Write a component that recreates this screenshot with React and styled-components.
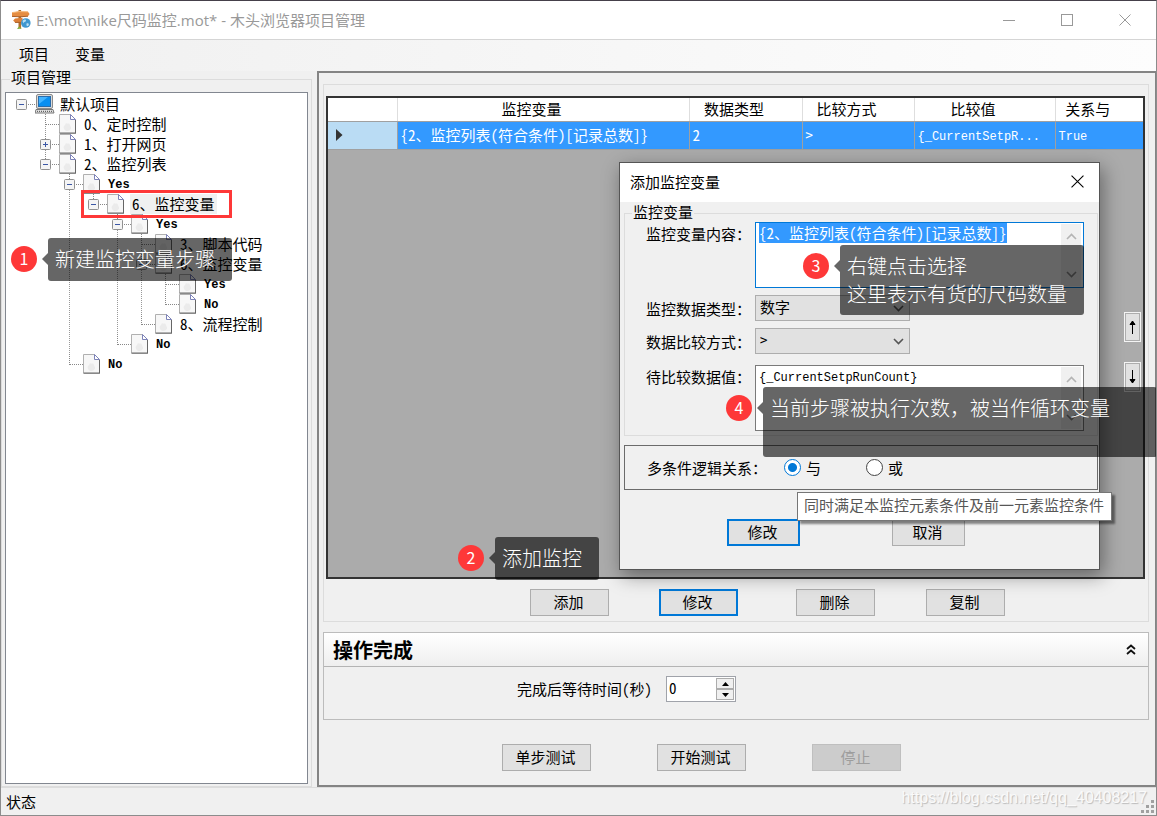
import React, { useEffect, useRef, useState } from "react";
import styled, { createGlobalStyle, css } from "styled-components";

const treeData = {
  label: "默认项目",
  open: true,
  children: [
    { label: "0、定时控制" },
    { label: "1、打开网页", open: false, children: [] },
    {
      label: "2、监控列表",
      open: true,
      children: [
        {
          label: "Yes",
          open: true,
          children: [
            {
              label: "6、监控变量",
              open: true,
              selected: true,
              children: [
                {
                  label: "Yes",
                  open: true,
                  children: [
                    { label: "3、脚本代码" },
                    {
                      label: "6、监控变量",
                      open: true,
                      children: [{ label: "Yes" }, { label: "No" }],
                    },
                    { label: "8、流程控制" },
                  ],
                },
                { label: "No" },
              ],
            },
          ],
        },
        { label: "No" },
      ],
    },
  ],
};

const columns = [
  { title: "监控变量" },
  { title: "数据类型", width: 113 },
  { title: "比较方式", width: 112 },
  { title: "比较值", width: 141 },
  { title: "关系与", width: 88 },
];

const rows = [
  ["{2、监控列表(符合条件)[记录总数]}", "2", ">", "{_CurrentSetpR...", "True"],
];

function SignpostIcon() {
  return (
    <svg width="20" height="20" viewBox="0 0 20 20">
      <path d="M7.5 0h2.6v19l-1.4-1-1.2 1z" fill="#b0702c" />
      <path d="M1 2.6l7-1 9 .2L18.6 4 17 6.2 9 6.8 1 6.4z" fill="#e58d42" />
      <path d="M1 2.6l7-1 9 .2" stroke="#f6b877" fill="none" />
      <path d="M1 6.4l8 .4 8-.6" stroke="#a9602a" fill="none" />
      <path d="M4 8.6l7.5-.8v4.6L4 12.4 2.2 10.4z" fill="#dd8038" />
      <path d="M4 12.4h6" stroke="#a9602a" />
      <path d="M6 19l2-2.6 2.6 2.2z" fill="#7fae35" />
      <circle cx="14.8" cy="13" r="4.8" fill="#3f97cf" />
      <path
        d="M11.5 11c2-2.5 4-1.5 3.4 0-.6 1.3-2.4.6-2.4 2.4zM15.5 13.5c2-.8 3 .3 2 2-1 1.2-2.4.6-2-2z"
        fill="#b9dff2"
      />
    </svg>
  );
}

function ComputerIcon() {
  return (
    <svg width="20" height="20" viewBox="0 0 20 20">
      <rect x="1.5" y=".5" width="16" height="14" rx="1.5" fill="#d9d9d9" stroke="#8b8b8b" />
      <rect x="3.5" y="2.5" width="12" height="10" fill="#0a8ff0" stroke="#2a6cab" />
      <path d="M4 3h9L4 10z" fill="#43b4ff" />
      <path d="M1 15.5h17l1 3.5H0z" fill="#e4e4e4" stroke="#777" />
      <path d="M2 17.3h15" stroke="#444" strokeDasharray="1 1" />
    </svg>
  );
}

function PageIcon() {
  return (
    <svg width="18" height="20" viewBox="0 0 18 20">
      <path d="M.5.5h11l5 5v13.5H.5z" fill="#f7f7f7" stroke="#b0b0b0" />
      <path d="M.5 19.2h16.5M16.5 6v13" stroke="#666" fill="none" />
      <path d="M11.5 .5v5h5z" fill="#fff" stroke="#7d83b8" />
      <path d="M5 15c-1-4 1-3 2-6 2 2 3-1 4 2s2 3 0 5-5 1-6-1z" fill="#ebebeb" />
    </svg>
  );
}

function CrossIcon({ size = 12 }) {
  return (
    <svg width={size} height={size} viewBox="0 0 12 12">
      <path d="M.5.5l11 11M11.5.5l-11 11" stroke="currentColor" fill="none" />
    </svg>
  );
}

function ArrowIcon({ down }) {
  return (
    <svg width="9" height="14" viewBox="0 0 9 14">
      <path
        d={down ? "M4.5 0v13M2 9.5l2.5 3.5L7 9.5z" : "M4.5 14V1M2 4.5L4.5 1 7 4.5z"}
        stroke="#000"
        fill="#000"
      />
    </svg>
  );
}

function Chevron({ up, color = "#555" }) {
  return (
    <svg width="11" height="7" viewBox="0 0 11 7">
      <path
        d={up ? "M1 6l4.5-4.5L10 6" : "M1 1l4.5 4.5L10 1"}
        stroke={color}
        strokeWidth="1.6"
        fill="none"
      />
    </svg>
  );
}

function TreeNode({ node, root, last }) {
  const [open, setOpen] = useState(node.open);
  const latin = /^[A-Za-z]+$/.test(node.label);

  return (
    <TreeItem $line={!last}>
      <TreeRow>
        <Branch $root={root}>
          {node.children && (
            <Expander
              type="button"
              aria-label={node.label}
              onClick={() => setOpen(!open)}
            >
              <svg width="11" height="11" viewBox="0 0 11 11">
                <rect x=".5" y=".5" width="10" height="10" rx="1" fill="#f4f4f4" stroke="#919191" />
                <path d={open ? "M3 5.5h5" : "M3 5.5h5M5.5 3v5"} stroke="#3b57a5" />
              </svg>
            </Expander>
          )}
        </Branch>
        <NodeIcon>{root ? <ComputerIcon /> : <PageIcon />}</NodeIcon>
        <NodeLabel $selected={node.selected} $latin={latin}>
          {node.label}
        </NodeLabel>
      </TreeRow>
      {open && node.children && node.children.length > 0 && (
        <TreeList $nested>
          {node.children.map((child, i) => (
            <TreeNode
              key={i}
              node={child}
              last={i === node.children.length - 1}
            />
          ))}
        </TreeList>
      )}
    </TreeItem>
  );
}

function ScrollStrip() {
  return (
    <Strip>
      <Chevron up color="#b4b4b4" />
      <Chevron color="#8a8a8a" />
    </Strip>
  );
}

function MonitorDialog() {
  const contentRef = useRef();
  const [relation, setRelation] = useState("and");

  useEffect(() => {
    contentRef.current.focus();
    contentRef.current.select();
  }, []);

  return (
    <Dialog role="dialog" aria-label="添加监控变量">
      <DialogTitle>
        添加监控变量
        <CloseButton type="button" aria-label="关闭">
          <CrossIcon size={13} />
        </CloseButton>
      </DialogTitle>
      <DialogBody>
        <FormGroup>
          <legend>监控变量</legend>
          <FieldRow $tall>
            <label htmlFor="content">监控变量内容：</label>
            <AreaBox $active>
              <Area
                id="content"
                ref={contentRef}
                spellCheck={false}
                defaultValue="{2、监控列表(符合条件)[记录总数]}"
              />
              <ScrollStrip />
            </AreaBox>
          </FieldRow>
          <FieldRow>
            <label htmlFor="type">监控数据类型：</label>
            <SelectBox>
              <select id="type" defaultValue="数字">
                <option>数字</option>
              </select>
              <Chevron />
            </SelectBox>
          </FieldRow>
          <FieldRow>
            <label htmlFor="compare">数据比较方式：</label>
            <SelectBox>
              <select id="compare" defaultValue=">">
                <option>&gt;</option>
              </select>
              <Chevron />
            </SelectBox>
          </FieldRow>
          <FieldRow $tall>
            <label htmlFor="value">待比较数据值：</label>
            <AreaBox>
              <Area
                id="value"
                $latin
                spellCheck={false}
                defaultValue="{_CurrentSetpRunCount}"
              />
              <ScrollStrip />
            </AreaBox>
          </FieldRow>
        </FormGroup>
        <RelationGroup role="radiogroup" aria-label="多条件逻辑关系">
          <span>多条件逻辑关系：</span>
          <RadioLabel>
            <input
              type="radio"
              name="relation"
              checked={relation === "and"}
              onChange={() => setRelation("and")}
            />
            与
          </RadioLabel>
          <RadioLabel>
            <input
              type="radio"
              name="relation"
              checked={relation === "or"}
              onChange={() => setRelation("or")}
            />
            或
          </RadioLabel>
        </RelationGroup>
        <DialogActions>
          <Button type="button" $width={73} $primary>
            修改
          </Button>
          <Button type="button" $width={73}>
            取消
          </Button>
        </DialogActions>
      </DialogBody>
      <Tooltip role="tooltip">同时满足本监控元素条件及前一元素监控条件</Tooltip>
    </Dialog>
  );
}

function Note({ number, left, top, width, height, children }) {
  return (
    <NoteWrap $left={left} $top={top}>
      <NoteNumber>{number}</NoteNumber>
      <NoteArrow />
      <NoteText $width={width} $height={height}>
        {children}
      </NoteText>
    </NoteWrap>
  );
}

export default function App() {
  return (
    <>
      <GlobalStyle />
      <Window>
        <TitleBar>
          <SignpostIcon />
          <h1>E:\mot\nike尺码监控.mot* - 木头浏览器项目管理</h1>
          <WindowButton type="button" aria-label="最小化">
            <svg width="12" height="12" viewBox="0 0 12 12">
              <path d="M0 6.5h12" stroke="currentColor" />
            </svg>
          </WindowButton>
          <WindowButton type="button" aria-label="最大化">
            <svg width="12" height="12" viewBox="0 0 12 12">
              <rect x=".5" y=".5" width="11" height="11" fill="none" stroke="currentColor" />
            </svg>
          </WindowButton>
          <WindowButton type="button" aria-label="关闭">
            <CrossIcon />
          </WindowButton>
        </TitleBar>
        <MenuBar>
          <button type="button">项目</button>
          <button type="button">变量</button>
        </MenuBar>
        <Main>
          <ProjectGroup>
            <legend>项目管理</legend>
            <Tree>
              <TreeList>
                <TreeNode node={treeData} root last />
              </TreeList>
            </Tree>
          </ProjectGroup>
          <Panel>
            <GridGroup>
              <GridBox>
                <Grid>
                  <colgroup>
                    <Col $width={69} />
                    {columns.map((c) => (
                      <Col key={c.title} $width={c.width} />
                    ))}
                  </colgroup>
                  <thead>
                    <tr>
                      <th aria-label="行" />
                      {columns.map((c) => (
                        <HeadCell key={c.title}>{c.title}</HeadCell>
                      ))}
                    </tr>
                  </thead>
                  <tbody>
                    {rows.map((row, i) => (
                      <tr key={i}>
                        <RowHead>
                          <svg width="7" height="12" viewBox="0 0 7 12">
                            <path d="M0 0l6.5 6L0 12z" fill="#333" />
                          </svg>
                        </RowHead>
                        {row.map((cell, j) => (
                          <Cell key={j} $latin={j > 2}>
                            {cell}
                          </Cell>
                        ))}
                      </tr>
                    ))}
                  </tbody>
                </Grid>
                <MoveButtons>
                  <MoveButton type="button" aria-label="上移">
                    <ArrowIcon />
                  </MoveButton>
                  <MoveButton type="button" aria-label="下移">
                    <ArrowIcon down />
                  </MoveButton>
                </MoveButtons>
              </GridBox>
              <GridActions>
                <Button type="button">添加</Button>
                <Button type="button" $primary>
                  修改
                </Button>
                <Button type="button">删除</Button>
                <Button type="button">复制</Button>
              </GridActions>
            </GridGroup>
            <DoneSection>
              <DoneHeader>
                <h2>操作完成</h2>
                <svg width="10" height="11" viewBox="0 0 10 11">
                  <path
                    d="M1 5l4-3.5L9 5M1 10l4-3.5L9 10"
                    stroke="#111"
                    strokeWidth="1.8"
                    fill="none"
                  />
                </svg>
              </DoneHeader>
              <DoneBody>
                <label htmlFor="wait">完成后等待时间(秒)</label>
                <Spinner>
                  <input id="wait" type="text" defaultValue="0" />
                  <SpinButtons>
                    <button type="button" aria-label="增加">
                      <svg width="7" height="4" viewBox="0 0 7 4">
                        <path d="M0 4l3.5-4L7 4z" />
                      </svg>
                    </button>
                    <button type="button" aria-label="减少">
                      <svg width="7" height="4" viewBox="0 0 7 4">
                        <path d="M0 0l3.5 4L7 0z" />
                      </svg>
                    </button>
                  </SpinButtons>
                </Spinner>
              </DoneBody>
            </DoneSection>
            <TestActions>
              <Button type="button" $width={89}>
                单步测试
              </Button>
              <Button type="button" $width={89}>
                开始测试
              </Button>
              <Button type="button" $width={89} disabled>
                停止
              </Button>
            </TestActions>
          </Panel>
        </Main>
        <StatusBar>
          <span>状态</span>
          <Watermark>https://blog.csdn.net/qq_40408217</Watermark>
          <Grip width="13" height="13" viewBox="0 0 13 13" fill="#a0a0a0">
            <path d="M10 0h3v3h-3zM5 5h3v3H5zM10 5h3v3h-3zM0 10h3v3H0zM5 10h3v3H5zM10 10h3v3h-3z" />
          </Grip>
        </StatusBar>

        <MonitorDialog />
        <RedFrame />
        <Note number="1" left={11} top={238} width={184} height={43}>
          新建监控变量步骤
        </Note>
        <Note number="2" left={458} top={537} width={104} height={43}>
          添加监控
        </Note>
        <Note number="3" left={803} top={245} width={244} height={70}>
          右键点击选择
          <br />
          这里表示有货的尺码数量
        </Note>
        <Note number="4" left={726} top={387} width={394} height={70}>
          当前步骤被执行次数，被当作循环变量
        </Note>
      </Window>
    </>
  );
}

const GlobalStyle = createGlobalStyle`
  * {
    box-sizing: border-box;
  }
  body {
    margin: 0;
    background: #f0f0f0;
    color: #000;
    font-family: "Noto Sans CJK SC", sans-serif;
    font-size: 15px;
    line-height: 20px;
  }
  button, input, select, textarea {
    font: inherit;
    color: inherit;
  }
  h1, h2 {
    margin: 0;
  }
  svg {
    display: block;
    flex: none;
  }
`;

const halfWidth = css`
  font-feature-settings: "hwid";
`;

const mono = css`
  font-family: "Liberation Mono", monospace;
  font-size: 12px;
`;

const Window = styled.div`
  position: relative;
  display: flex;
  flex-direction: column;
  min-height: 100vh;
  overflow: hidden;
  background: #f0f0f0;
  border: 1px solid #8c8c8c;
  border-top-color: #45404a;
`;

const TitleBar = styled.header`
  display: flex;
  align-items: center;
  height: 39px;
  padding: 0 2px 1px 10px;
  background: #fff;
  border-bottom: 1px solid #d5d5d5;
  h1 {
    flex: 1;
    padding-left: 5px;
    color: #999;
    font-family: "Open Sans", "Noto Sans CJK SC", sans-serif;
    font-size: 15px;
    font-weight: 400;
    white-space: nowrap;
  }
`;

const WindowButton = styled.button`
  display: flex;
  justify-content: center;
  align-items: center;
  width: 58px;
  height: 36px;
  padding: 0;
  border: 0;
  background: none;
  color: #999;
`;

const MenuBar = styled.nav`
  display: flex;
  gap: 10px;
  height: 31px;
  padding: 2px 10px 6px;
  background: linear-gradient(90deg, #f0f0f0, #fdfdfd);
  button {
    padding: 0 8px;
    border: 0;
    background: none;
  }
`;

const Main = styled.main`
  flex: 1;
  display: flex;
  gap: 5px;
  min-height: 0;
`;

const ProjectGroup = styled.fieldset`
  display: flex;
  width: 311px;
  min-width: 0;
  margin: 0;
  padding: 5px 3px 2px;
  border: 1px solid #dcdcdc;
  legend {
    margin-left: 5px;
    padding: 0 1px 4px;
    line-height: 12px;
  }
`;

const Tree = styled.div`
  flex: 1;
  padding: 1px 3px;
  background: #fff;
  border: 1px solid #828790;
`;

const TreeList = styled.ul`
  margin: 0;
  margin-left: ${(p) => (p.$nested ? 24 : 0)}px;
  padding: 0;
  list-style: none;
`;

const TreeItem = styled.li`
  ${(p) =>
    p.$line &&
    css`
      background: linear-gradient(#999 50%, transparent 50%) 12px 0 / 1px 2px
        repeat-y;
    `}
`;

const TreeRow = styled.div`
  display: flex;
  align-items: center;
  height: 20px;
`;

const Branch = styled.div`
  display: grid;
  width: 26px;
  height: 20px;
  &::before {
    content: "";
    grid-area: 1 / 1;
    height: 10px;
    margin-left: 12px;
    border-bottom: 1px dotted #888;
    border-left: ${(p) => (p.$root ? "0" : "1px dotted #888")};
  }
`;

const Expander = styled.button`
  grid-area: 1 / 1;
  place-self: center start;
  margin-left: 7px;
  padding: 0;
  border: 0;
  background: none;
`;

const NodeIcon = styled.span`
  display: flex;
  width: 23px;
`;

const NodeLabel = styled.span`
  padding: 0 2px;
  white-space: nowrap;
  ${halfWidth}
  ${(p) =>
    p.$latin &&
    css`
      ${mono}
      padding-top: 2px;
      font-weight: 700;
    `}
  background: ${(p) => (p.$selected ? "#f0f0f0" : "none")};
`;

const Panel = styled.section`
  flex: 1;
  display: flex;
  flex-direction: column;
  min-width: 0;
  padding: 11px 6px 14px 4px;
  border: 2px solid #848484;
  border-right-width: 1px;
`;

const GridGroup = styled.div`
  flex: 1;
  display: flex;
  flex-direction: column;
  padding: 11px 3px 5px 2px;
  border: 1px solid #dcdcdc;
`;

const GridBox = styled.div`
  position: relative;
  flex: 1;
  border: 2px solid #333;
  background: #ababab;
`;

const Grid = styled.table`
  width: 100%;
  table-layout: fixed;
  border-collapse: collapse;
  th,
  td {
    padding: 0 3px;
    font-weight: 400;
    text-align: left;
    white-space: nowrap;
    overflow: hidden;
  }
  thead th {
    height: 23px;
    background: #fff;
    border-right: 1px solid #dedede;
    border-bottom: 1px solid #a0a0a0;
  }
  th:last-child,
  td:last-child {
    border-right: 0;
  }
`;

const Col = styled.col`
  width: ${(p) => (p.$width ? `${p.$width}px` : "auto")};
`;

const HeadCell = styled.th`
  && {
    padding-right: 26px;
    text-align: center;
  }
`;

const RowHead = styled.th`
  && {
    height: 28px;
    padding-left: 8px;
    background: #badcf4;
    border-right: 1px solid #a0a0a0;
    border-bottom: 1px solid #a0a0a0;
  }
`;

const Cell = styled.td`
  background: #3399ff;
  color: #fff;
  border-right: 1px solid #a0a0a0;
  border-bottom: 1px solid #a0a0a0;
  ${halfWidth}
  ${(p) => p.$latin && mono}
  && {
    padding-top: ${(p) => (p.$latin ? 4 : 0)}px;
  }
`;

const MoveButtons = styled.div`
  position: absolute;
  top: 214px;
  right: 2px;
  display: grid;
  gap: 20px;
`;

const MoveButton = styled.button`
  display: flex;
  justify-content: center;
  align-items: center;
  width: 17px;
  height: 30px;
  padding: 0;
  border: 1px solid #f4f4f4;
  background: #e1e1e1;
  box-shadow: inset 0 0 0 1px #adadad;
`;

const Button = styled.button`
  width: ${(p) => p.$width || 79}px;
  height: 27px;
  padding: 0 2px 2px 0;
  border: ${(p) => (p.$primary ? "2px solid #0078d7" : "1px solid #adadad")};
  background: #e1e1e1;
  line-height: 21px;
  &:disabled {
    border-color: #bfbfbf;
    background: #cccccc;
    color: #9d9d9d;
  }
`;

const GridActions = styled.div`
  display: grid;
  grid-template-columns: 129px 137px 130px 79px;
  padding: 10px 0 0 204px;
`;

const DoneSection = styled.section`
  margin-top: 10px;
  border: 1px solid #bcbcbc;
`;

const DoneHeader = styled.div`
  display: flex;
  justify-content: space-between;
  align-items: center;
  height: 34px;
  padding: 0 12px 0 9px;
  background: linear-gradient(#fff, #efefef);
  border-bottom: 1px solid #b4b4b4;
  h2 {
    font-size: 20px;
    font-weight: 700;
  }
`;

const DoneBody = styled.div`
  display: flex;
  align-items: center;
  gap: 14px;
  height: 52px;
  padding: 0 0 8px 193px;
  label {
    ${halfWidth}
  }
`;

const Spinner = styled.div`
  display: flex;
  width: 70px;
  height: 26px;
  padding: 1px;
  border: 1px solid #a0a3aa;
  background: #fff;
  input {
    width: 48px;
    height: 20px;
    padding: 0 1px;
    border: 0;
    outline: 0;
    background: none;
    ${halfWidth}
  }
`;

const SpinButtons = styled.div`
  flex: 1;
  display: grid;
  button {
    display: grid;
    place-items: center;
    padding: 0;
    border: 1px solid #acacac;
    background: #f0f0f0;
  }
`;

const TestActions = styled.div`
  display: flex;
  gap: 66px;
  padding: 24px 0 0 179px;
`;

const StatusBar = styled.footer`
  position: relative;
  display: flex;
  justify-content: space-between;
  align-items: center;
  height: 28px;
  padding: 0 9px 0 5px;
  border-top: 1px solid #dcdcdc;
`;

const Watermark = styled.span`
  padding-bottom: 8px;
  color: #fafafa;
  font-family: "Liberation Sans", sans-serif;
  font-size: 16px;
  text-shadow: 1px 1px 1px #bbb;
`;

const Grip = styled.svg`
  position: absolute;
  right: 2px;
  bottom: 2px;
`;

const Dialog = styled.div`
  position: absolute;
  top: 161px;
  left: 618px;
  width: 481px;
  border: 1px solid #555;
  background: #f0f0f0;
  box-shadow: 3px 6px 18px rgba(0, 0, 0, 0.4);
`;

const DialogTitle = styled.div`
  display: flex;
  justify-content: space-between;
  align-items: center;
  height: 39px;
  padding: 0 1px 2px 10px;
  background: #fff;
`;

const CloseButton = styled.button`
  display: grid;
  place-items: center;
  width: 42px;
  height: 36px;
  padding: 0;
  border: 0;
  background: none;
`;

const DialogBody = styled.div`
  padding: 2px 1px 23px 4px;
`;

const FormGroup = styled.fieldset`
  display: grid;
  gap: 7px;
  margin: 0;
  min-width: 0;
  padding: 0 13px 4px 21px;
  border: 1px solid #dcdcdc;
  legend {
    margin-left: -14px;
    padding: 0 1px 2px;
    line-height: 16px;
  }
`;

const FieldRow = styled.div`
  display: grid;
  grid-template-columns: 109px 1fr;
  &:last-child {
    margin-top: 4px;
  }
  label {
    padding-top: ${(p) => (p.$tall ? 2 : 4)}px;
    white-space: nowrap;
  }
`;

const AreaBox = styled.div`
  display: flex;
  height: 66px;
  border: 1px solid ${(p) => (p.$active ? "#0078d7" : "#7a7a7a")};
  background: #fff;
`;

const Area = styled.textarea`
  flex: 1;
  min-width: 0;
  padding: ${(p) => (p.$latin ? 2 : 0)}px 3px 0;
  border: 0;
  outline: 0;
  background: none;
  resize: none;
  overflow: hidden;
  line-height: 20px;
  ${halfWidth}
  ${(p) => p.$latin && mono}
  &::selection {
    background: #3399ff;
    color: #fff;
  }
`;

const Strip = styled.div`
  display: flex;
  flex-direction: column;
  justify-content: space-between;
  align-items: center;
  width: 20px;
  margin: 1px 2px 1px 0;
  padding: 9px 0 8px;
  background: #f0f0f0;
`;

const SelectBox = styled.div`
  display: grid;
  align-items: center;
  width: 155px;
  height: 26px;
  select {
    grid-area: 1 / 1;
    width: 100%;
    height: 100%;
    padding: 0 4px 2px;
    border: 1px solid #adadad;
    background: #e1e1e1;
    appearance: none;
    ${halfWidth}
  }
  svg {
    grid-area: 1 / 1;
    justify-self: end;
    margin-right: 6px;
    pointer-events: none;
  }
`;

const RelationGroup = styled.div`
  display: flex;
  align-items: center;
  height: 45px;
  margin-top: 9px;
  padding-left: 22px;
  border: 1px solid #6b6b6b;
`;

const RadioLabel = styled.label`
  display: flex;
  align-items: center;
  gap: 5px;
  margin-right: 45px;
  & + & {
    margin: 0;
  }
  input {
    appearance: none;
    width: 17px;
    height: 17px;
    margin: 0;
    border: 1px solid #444;
    border-radius: 50%;
    background: #fff;
  }
  input:checked {
    border-color: #0078d7;
    background: radial-gradient(circle, #0078d7 4px, #fff 5px);
  }
  span + & {
    margin-left: 17px;
  }
`;

const DialogActions = styled.div`
  display: flex;
  gap: 92px;
  margin-top: 29px;
  padding-left: 103px;
`;

const Tooltip = styled.div`
  position: absolute;
  top: 329px;
  left: 177px;
  padding: 2px 7px 5px 6px;
  border: 1px solid #767676;
  background: #fff;
  color: #575757;
  white-space: nowrap;
  box-shadow: 3px 3px 2px rgba(0, 0, 0, 0.45);
`;

const RedFrame = styled.div`
  position: absolute;
  top: 189px;
  left: 80px;
  width: 151px;
  height: 28px;
  border: 3px solid #fe3838;
  pointer-events: none;
`;

const NoteWrap = styled.div`
  position: absolute;
  top: ${(p) => p.$top - 1}px;
  left: ${(p) => p.$left - 1}px;
  display: flex;
  align-items: flex-start;
`;

const NoteNumber = styled.span`
  width: 26px;
  height: 26px;
  margin: 8px 5px 0 0;
  border-radius: 50%;
  background: #fe3838;
  color: #fff;
  font-size: 16px;
  line-height: 24px;
  text-align: center;
`;

const NoteArrow = styled.span`
  margin-top: 15px;
  border: 6px solid transparent;
  border-left-width: 0;
  border-right-color: rgba(0, 0, 0, 0.6);
`;

const NoteText = styled.div`
  width: ${(p) => p.$width}px;
  height: ${(p) => p.$height}px;
  padding: 7px;
  border-radius: 3px;
  background: rgba(0, 0, 0, 0.6);
  color: #fff;
  font-size: 20px;
  font-weight: 300;
  line-height: 28px;
  white-space: nowrap;
`;
